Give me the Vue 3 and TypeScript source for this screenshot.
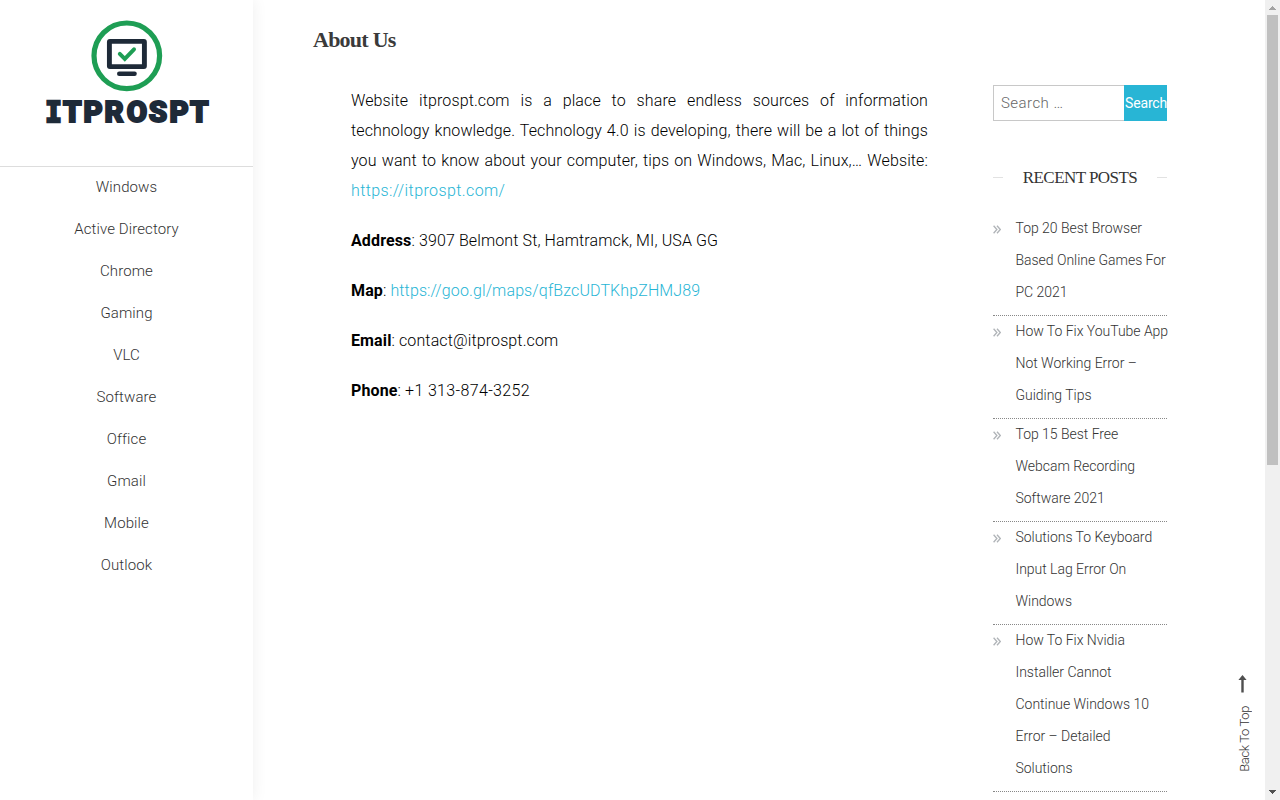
<script setup lang="ts">
interface Post { lines: string[] }

const menu: string[] = ['Windows', 'Active Directory', 'Chrome', 'Gaming', 'VLC', 'Software', 'Office', 'Gmail', 'Mobile', 'Outlook']

const intro: string[] = [
  'Website itprospt.com is a place to share endless sources of information',
  'technology knowledge. Technology 4.0 is developing, there will be a lot of things',
  'you want to know about your computer, tips on Windows, Mac, Linux,… Website:',
]

const posts: Post[] = [
  { lines: ['Top 20 Best Browser', 'Based Online Games For', 'PC 2021'] },
  { lines: ['How To Fix YouTube App', 'Not Working Error –', 'Guiding Tips'] },
  { lines: ['Top 15 Best Free', 'Webcam Recording', 'Software 2021'] },
  { lines: ['Solutions To Keyboard', 'Input Lag Error On', 'Windows'] },
  { lines: ['How To Fix Nvidia', 'Installer Cannot', 'Continue Windows 10', 'Error – Detailed', 'Solutions'] },
]
</script>

<template>
  <div class="page">
    <aside class="side">
      <div class="brand">
        <svg class="logo" width="253" height="166" viewBox="0 0 253 166">
          <circle cx="126.8" cy="55.8" r="32.8" fill="none" stroke="#1e9e54" stroke-width="5.2" />
          <rect x="109.4" y="41.4" width="35" height="25.2" rx="0.5" fill="none" stroke="#1e2a38" stroke-width="4.9" stroke-linejoin="round" />
          <path d="M119.2 73.8H134.6" stroke="#1e2a38" stroke-width="4.4" stroke-linecap="round" />
          <path d="M119.8 53.8L124.8 58.8L134 49.3" fill="none" stroke="#1e9e54" stroke-width="4" stroke-linecap="round" stroke-linejoin="miter" />
          <text class="wordmark" y="122.2" x="45.3 63 83.4 104.4 126.8 148.8 169.4 189.9"><tspan class="slab">I</tspan>TPROSPT</text>
        </svg>
      </div>
      <nav class="menu">
        <a v-for="m in menu" :key="m">{{ m }}</a>
      </nav>
    </aside>

    <main class="main">
      <h1>About Us</h1>
      <div class="columns">
        <article class="article">
          <p>
            <span v-for="l in intro" :key="l" class="full">{{ l }}</span>
            <a class="home">https://itprospt.com/</a>
          </p>
          <p><b>Address</b>: 3907 Belmont St, Hamtramck, MI, USA GG</p>
          <p><b>Map</b>: <a>https://goo.gl/maps/qfBzcUDTKhpZHMJ89</a></p>
          <p><b>Email</b>: contact@itprospt.com</p>
          <p><b>Phone</b>: <span class="digits">+1 313-874-3252</span></p>
        </article>

        <section class="widgets">
          <form class="search">
            <input type="text" placeholder="Search …" />
            <button type="button">Search</button>
          </form>
          <h2><span>RECENT POSTS</span></h2>
          <ul>
            <li v-for="p in posts" :key="p.lines[0]">
              <svg class="chev" width="8" height="9" viewBox="0 0 8 9">
                <path d="M0.6 0.7L3.9 4.5L0.6 8.3M4 0.7L7.3 4.5L4 8.3" fill="none" stroke="#b0b4b8" stroke-width="1.3" />
              </svg>
              <div><span v-for="l in p.lines" :key="l" class="line">{{ l }}</span></div>
            </li>
          </ul>
        </section>
      </div>
    </main>

    <div class="totop">
      <svg width="9" height="18" viewBox="0 0 9 18">
        <path d="M4.5 0L8.6 5H5.7V17.4H3.3V5H0.4Z" fill="#4f4f4f" />
      </svg>
      <span>Back To Top</span>
    </div>

    <div class="scroll">
      <svg width="15" height="15" viewBox="0 0 15 15"><path d="M7 6h1v1h1v1h1v1h1v1H4V9h1V8h1V7h1z" fill="#a3a3a3" /></svg>
      <div class="thumb"></div>
      <svg class="down" width="15" height="15" viewBox="0 0 15 15"><path d="M4 5h7v1h-1v1H9v1H8v1H7V8H6V7H5V6H4z" fill="#505050" /></svg>
    </div>
  </div>
</template>

<style>
body { overflow: hidden; background: #fff; }
</style>

<style scoped>
.page {
  position: relative;
  display: flex;
  width: 1280px;
  height: 800px;
  overflow: hidden;
  background: #fff;
  font-family: Roboto, "Liberation Sans", sans-serif;
  font-weight: 300;
  color: #000;
}
.side { width: 253px; flex: none; box-shadow: 0 0 15px rgba(0, 0, 0, 0.07); }
.brand { height: 166px; border-bottom: 1px solid #ddd; }
.logo { display: block; }
.wordmark {
  font: 900 29.5px Roboto, sans-serif;
  fill: #1e2a38;
  stroke: #1e2a38;
  stroke-width: 1.9px;
}
.slab { font: bold 27.5px "DejaVu Sans Mono", monospace; stroke-width: 2.4px; }
.menu { display: flex; flex-direction: column; }
.menu a {
  height: 42px;
  line-height: 40px;
  text-align: center;
  font-size: 15px;
  letter-spacing: 0.1px;
  color: #333;
}
.main { flex: 1; padding-left: 60px; }
h1 {
  margin: 0;
  height: 85px;
  font: bold 22px/80px "Liberation Serif", serif;
  letter-spacing: -0.75px;
  color: #3a3a3a;
}
.columns { display: flex; padding-left: 38px; gap: 65px; }
.article { width: 577px; padding-top: 1px; font-size: 16px; line-height: 30px; letter-spacing: 0.12px; }
.article p { margin: 0 0 20px; }
.article b { font-weight: 700; }
.article a { color: #28b5d5; }
.article .home { letter-spacing: 0.4px; }
.digits { letter-spacing: 0.35px; }
.full { display: block; white-space: nowrap; text-align: justify; text-align-last: justify; }
.widgets { width: 174px; color: #333; }
.search { display: flex; height: 36px; }
input {
  box-sizing: border-box;
  width: 131px;
  height: 36px;
  padding: 0 7px;
  border: 1px solid #c8c8c8;
  border-right: 0;
  font: 300 15px Roboto, sans-serif;
  letter-spacing: 0.45px;
}
input::placeholder { color: #666; }
button {
  width: 43px;
  padding: 0 0 0 1px;
  border: 0;
  background: #28b5d5;
  color: #fff;
  font: 400 14px Roboto, sans-serif;
  letter-spacing: -0.15px;
  white-space: nowrap;
}
h2 {
  display: flex;
  align-items: center;
  justify-content: space-between;
  margin: 41px 0 21px;
  font: 400 17px/30px "Liberation Serif", serif;
  letter-spacing: -0.55px;
  white-space: nowrap;
}
h2 span { padding-top: 1px; line-height: 29px; }
h2::before, h2::after { content: ""; width: 10px; height: 1px; background: #e2e2e2; }
ul { list-style: none; margin: 0; padding: 0; }
li { display: flex; gap: 14.5px; padding-bottom: 6px; border-bottom: 1px dotted #888; font-size: 14px; line-height: 30px; letter-spacing: -0.03px; }
.chev { flex: none; margin-top: 12px; }
.line { display: block; height: 32px; white-space: nowrap; }
.totop {
  position: absolute;
  left: 1237px;
  top: 675px;
  display: flex;
  flex-direction: column;
  gap: 13px;
  padding-left: 1px;
}
.totop span {
  writing-mode: vertical-rl;
  transform: rotate(180deg);
  font-size: 13px;
  line-height: 13px;
  letter-spacing: -0.38px;
  color: #333;
}
.scroll {
  position: absolute;
  right: 0;
  top: 0;
  width: 15px;
  height: 800px;
  background: #f0f0f0;
  display: flex;
  flex-direction: column;
}
.thumb { width: 11px; height: 450px; margin-left: 2px; background: #c0c0c0; }
.scroll svg { flex: none; }
.down { margin-top: auto; }
</style>
